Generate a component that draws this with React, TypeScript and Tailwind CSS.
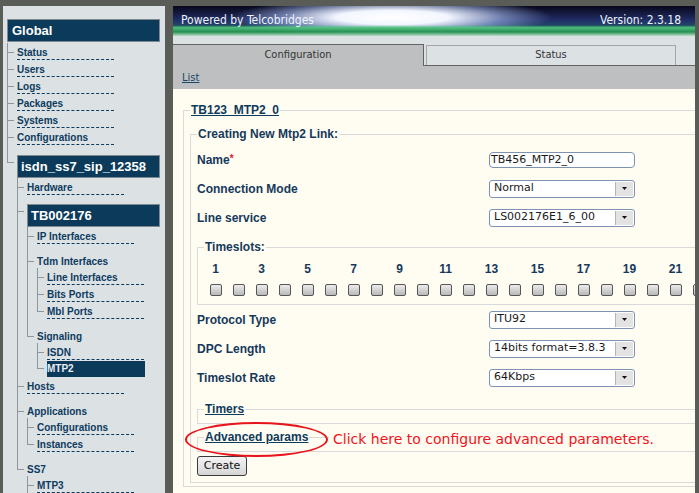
import React from "react";

type Kind = "link" | "folder" | "box" | "active";

interface TreeNode {
	label: string;
	kind: Kind;
	gap?: string;
	tick?: string;
	children?: TreeNode[];
}

const SANS = "font-['Liberation_Sans',Arial,sans-serif]";
const DV = "font-['DejaVu_Sans',sans-serif]";
const DVC = "font-['DejaVu_Sans_Condensed','DejaVu_Sans',sans-serif]";

const link = (label: string): TreeNode => ({ label, kind: "link" });

const TREE: TreeNode[] = [
	link("Status"),
	link("Users"),
	link("Logs"),
	link("Packages"),
	link("Systems"),
	link("Configurations"),
	{
		label: "isdn_ss7_sip_12358",
		kind: "box",
		gap: "mt-[10px]",
		tick: "h-[18px]",
		children: [
			link("Hardware"),
			{
				label: "TB002176",
				kind: "box",
				gap: "mt-[9px]",
				tick: "h-[17px]",
				children: [
					link("IP Interfaces"),
					{
						label: "Tdm Interfaces",
						kind: "folder",
						children: [link("Line Interfaces"), link("Bits Ports"), link("Mbl Ports")],
					},
					{
						label: "Signaling",
						kind: "folder",
						children: [link("ISDN"), { label: "MTP2", kind: "active" }],
					},
				],
			},
			link("Hosts"),
			{
				label: "Applications",
				kind: "folder",
				children: [link("Configurations"), link("Instances")],
			},
			{
				label: "SS7",
				kind: "folder",
				children: [link("MTP3"), link("M3UA"), link("SCCP")],
			},
		],
	},
];

// height of the connector piece above (and including) the horizontal tick
const TICK: Record<Kind, string> = {
	link: "h-[10px]",
	folder: "h-[18px]",
	box: "h-[17px]",
	active: "h-[9px]",
};

const NodeLabel = ({ node }: { node: TreeNode }) => {
	if (node.kind === "box") {
		return (
			<div
				className={`${node.gap ?? "mt-[9px]"} h-[23px] bg-[#0b3a5a] border border-[#7f8990] pl-[3px] text-white font-bold text-[13px] leading-[21px] whitespace-nowrap`}
			>
				{node.label}
			</div>
		);
	}
	if (node.kind === "active") {
		return (
			<div className="mt-[1px] w-[98px] bg-[#0b3a5a] text-[#e8eef4] font-bold text-[10px] leading-[12px] pt-[2px] pb-[2px]">
				{node.label}
			</div>
		);
	}
	if (node.kind === "folder") {
		return <div className="pt-[12px] text-[10px] leading-[12px] font-bold text-[#0d3b5e]">{node.label}</div>;
	}
	return (
		<div className="pt-[4px]">
			<a className="block w-[97px] text-[10px] leading-[12px] font-bold text-[#0d3b5e] border-b border-dashed border-[#0d3b5e]">
				{node.label}
			</a>
		</div>
	);
};

const Tree = ({ nodes }: { nodes: TreeNode[] }) => (
	<ul>
		{nodes.map((node, i) => {
			const last = i === nodes.length - 1;
			return (
				<li key={i} className="flex">
					<div className="w-[10px] shrink-0 flex flex-col">
						<div className={`${node.tick ?? TICK[node.kind]} w-[7px] border-l border-b border-[#8d969b]`} />
						{!last && <div className="flex-1 w-[7px] border-l border-[#8d969b]" />}
					</div>
					<div className="flex-1 min-w-0">
						<NodeLabel node={node} />
						{node.children && <Tree nodes={node.children} />}
					</div>
				</li>
			);
		})}
	</ul>
);

const Sidebar = () => (
	<div className={`w-[162px] shrink-0 bg-[#dce1e4] pt-[13px] pl-[4px] pr-[5px] overflow-hidden ${SANS}`}>
		<div className="h-[23px] mb-[1px] bg-[#0b3a5a] border border-[#7f8990] pl-[4px] text-white font-bold text-[13px] leading-[21px]">
			Global
		</div>
		<Tree nodes={TREE} />
	</div>
);

const Select = ({ value }: { value: string }) => (
	<div className="w-[146px] h-[18px] border border-[#7d93b1] rounded-[3px] bg-white flex items-center">
		<span className={`pl-[4px] text-[11px] text-[#1a1a1a] ${DV}`}>{value}</span>
		<span className="ml-auto mr-[1px] w-[18px] h-[14px] bg-[#e3e3e3] border-l border-[#b4b4b4] flex items-center justify-center">
			<svg width="5" height="3" viewBox="0 0 5 3">
				<path d="M0 0h5L2.5 3z" fill="#111" />
			</svg>
		</span>
	</div>
);

const Row = ({ label, required, children }: { label: string; required?: boolean; children: React.ReactNode }) => (
	<div className="flex items-center h-[29px]">
		<div className="w-[292px] shrink-0 text-[12px] font-bold text-[#15395b]">
			{label}
			{required && <span className="text-[#e8102a] text-[10px] align-top">*</span>}
		</div>
		{children}
	</div>
);

const SLOTS = Array.from({ length: 31 }, (_, i) => i + 1);

const Main = () => (
	<div className="w-[522px] shrink-0 flex flex-col overflow-hidden">
		{/* HEADER: night sky + green horizon, with a glow layer on top */}
		<div className="h-[30px] shrink-0 bg-[#141a40] bg-linear-to-b from-[#08081c] via-[#22306a] to-[#1f7a45]">
			<div className="h-full bg-[radial-gradient(160px_20px_at_42%_38%,#ffffff_0%,#f2f6ff_35%,rgba(170,190,240,0.55)_70%,rgba(90,105,180,0)_100%)]">
				<div className="h-full bg-[linear-gradient(to_bottom,transparent_0%,transparent_64%,rgba(80,195,125,0.95)_72%,rgba(38,145,82,0.95)_86%,#bcdcc8_100%)]">
					<div
						className={`h-full flex items-center justify-between pl-[8px] pr-[14px] pb-[2px] text-[12px] text-[#eef3fb] ${DVC}`}
					>
						<span>Powered by Telcobridges</span>
						<span>Version: 2.3.18</span>
					</div>
				</div>
			</div>
		</div>

		{/* TABS */}
		<div className={`shrink-0 bg-[#dce1e4] pt-[8px] flex text-[11px] text-[#333] ${DVC}`}>
			<div className="w-[251px] h-[22px] bg-[#bdbfc0] border-t border-r border-[#626262] flex items-center justify-center">
				Configuration
			</div>
			<div className="flex-1 h-[22px] border-b border-[#626262] pl-[2px] pt-[1px]">
				<div className="w-[250px] h-[20px] border border-b-0 border-[#a5a5a5] bg-[#dce1e4] flex items-center justify-center">
					Status
				</div>
			</div>
		</div>
		<div className="h-[23px] shrink-0 bg-[#bdbfc0] flex items-center pl-[9px]">
			<a className={`underline text-[10px] text-[#1b4868] ${DV}`}>List</a>
		</div>

		{/* CONTENT */}
		<div className={`relative flex-1 bg-[#fffcf2] pl-[10px] pt-[14px] ${SANS}`}>
			<fieldset className="border border-[#dadada] pl-[6px] pb-[3px]">
				<legend className="px-[1px] text-[12px] leading-[14px] font-bold text-[#0e3a5c] underline">TB123_MTP2_0</legend>

				<fieldset className="mt-[10px] border border-[#dadada] pl-[6px] pb-[6px]">
					<legend className="px-[1px] text-[12px] leading-[14px] font-bold text-[#15395b]">
						Creating New Mtp2 Link:
					</legend>
					<div className="pt-[4px]">
						<Row label="Name" required>
							<div
								className={`w-[146px] h-[16px] border border-[#7d93b1] rounded-[4px] bg-white pl-[1px] text-[11px] leading-[14px] text-[#1a1a1a] ${DV}`}
							>
								TB456_MTP2_0
							</div>
						</Row>
						<Row label="Connection Mode">
							<Select value="Normal" />
						</Row>
						<Row label="Line service">
							<Select value="LS002176E1_6_00" />
						</Row>
					</div>

					<fieldset className="mt-[8px] border border-[#dadada] pl-[6px] pb-[8px]">
						<legend className="px-[1px] text-[12px] leading-[14px] font-bold text-[#15395b]">Timeslots:</legend>
						<div className="mt-[8px] grid grid-cols-[repeat(31,23px)] text-[12px] leading-[14px] font-bold text-[#15395b]">
							{SLOTS.map((n) => (
								<span key={n} className="text-center">
									{n % 2 === 1 ? n : ""}
								</span>
							))}
						</div>
						<div className="mt-[8px] grid grid-cols-[repeat(31,23px)]">
							{SLOTS.map((n) => (
								<span
									key={n}
									className="justify-self-center w-[12px] h-[12px] border border-[#555] rounded-[2px] bg-gradient-to-b from-[#ececec] to-[#b9b9b9]"
								/>
							))}
						</div>
					</fieldset>

					<Row label="Protocol Type">
						<Select value="ITU92" />
					</Row>
					<Row label="DPC Length">
						<Select value="14bits format=3.8.3" />
					</Row>
					<Row label="Timeslot Rate">
						<Select value="64Kbps" />
					</Row>

					<fieldset className="mt-[10px] border border-[#dadada] pl-[6px] pb-[7px]">
						<legend className="px-[1px] text-[12px] leading-[14px] font-bold text-[#0e3a5c] underline">Timers</legend>
					</fieldset>
					<fieldset className="mt-[6px] border border-[#dadada] pl-[6px] pb-[7px]">
						<legend className="px-[1px] text-[12px] leading-[14px] font-bold text-[#0e3a5c] underline">
							Advanced params
						</legend>
					</fieldset>

					<button
						className={`mt-[4px] w-[50px] h-[20px] border border-[#3a3a3a] rounded-[3px] bg-gradient-to-b from-[#f4f4f4] to-[#d6d6d6] text-[11px] text-[#111] ${DV}`}
					>
						Create
					</button>
				</fieldset>
			</fieldset>

			{/* ANNOTATION */}
			<div className="absolute left-[12px] top-[333px] w-[143px] h-[35px] rounded-[50%] border-2 border-[#e8141c]" />
			<div
				className={`absolute left-[156px] right-0 top-[341px] h-[18px] bg-[#fffcf2] pl-[4px] text-[14px] leading-[18px] text-[#f0141c] whitespace-nowrap ${DV}`}
			>
				Click here to configure advanced parameters.
			</div>
		</div>
	</div>
);

export default function App() {
	return (
		<div className="h-screen w-full overflow-hidden bg-[#5a5d57] flex pt-[6px] pl-[3px] gap-[8px]">
			<Sidebar />
			<Main />
		</div>
	);
}
